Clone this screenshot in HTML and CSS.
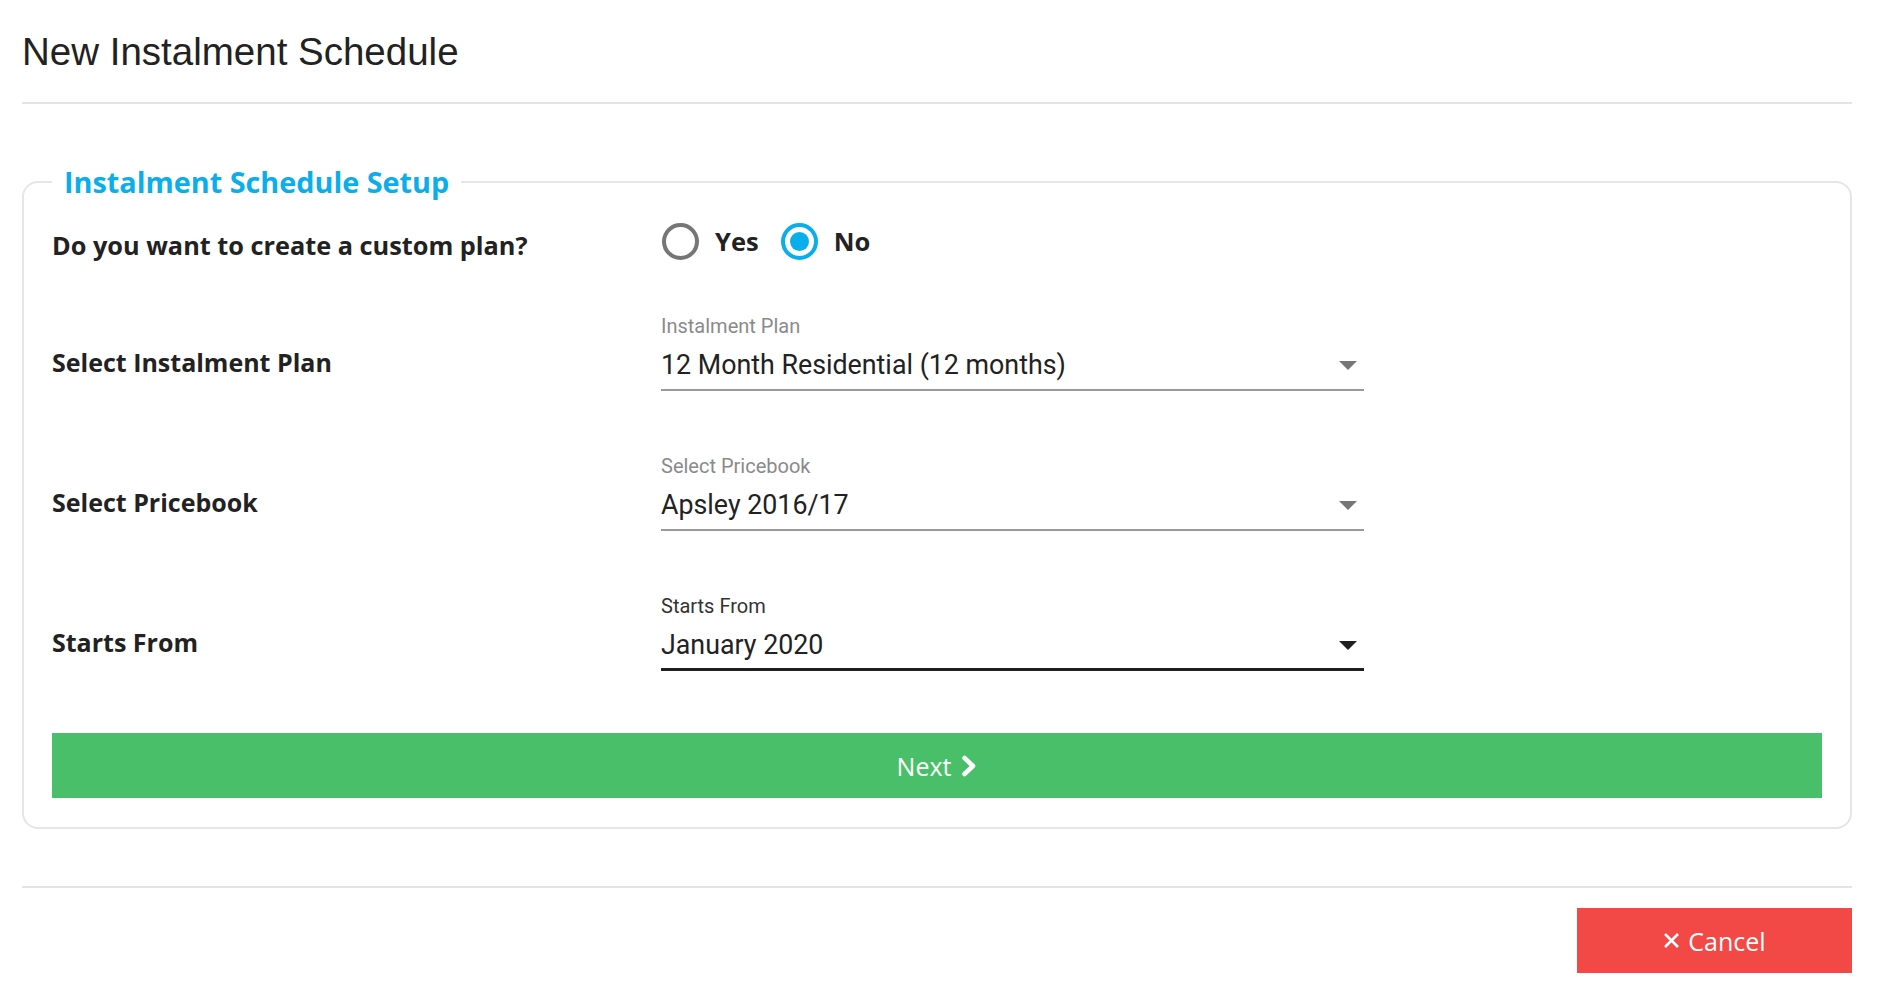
FILE: index.html
```html
<!DOCTYPE html>
<html lang="en">
<head>
<meta charset="utf-8">
<title>New Instalment Schedule</title>
<link rel="stylesheet" href="styles.css">
</head>
<body>
<div class="page">
  <header class="page-header">
    <h1 class="page-title">New Instalment Schedule</h1>
  </header>

  <fieldset class="setup">
    <legend class="setup-legend">Instalment Schedule Setup</legend>

    <div class="row row-question">
      <div class="row-label q-label">Do you want to create a custom plan?</div>
      <div class="radio-group">
        <label class="radio"><span class="radio-circle"></span><span class="radio-text">Yes</span></label>
        <label class="radio"><span class="radio-circle is-checked"><span class="radio-dot"></span></span><span class="radio-text">No</span></label>
      </div>
    </div>

    <div class="select-rows">
      <div class="row row-select">
        <div class="row-label">Select Instalment Plan</div>
        <div class="field">
          <div class="field-label">Instalment Plan</div>
          <div class="field-input">
            <span class="field-value">12 Month Residential (12 months)</span>
            <svg class="field-arrow" width="18" height="9" viewBox="0 0 18 9"><polygon points="0,0 18,0 9,9"/></svg>
          </div>
        </div>
      </div>

      <div class="row row-select">
        <div class="row-label">Select Pricebook</div>
        <div class="field">
          <div class="field-label">Select Pricebook</div>
          <div class="field-input">
            <span class="field-value">Apsley 2016/17</span>
            <svg class="field-arrow" width="18" height="9" viewBox="0 0 18 9"><polygon points="0,0 18,0 9,9"/></svg>
          </div>
        </div>
      </div>

      <div class="row row-select">
        <div class="row-label">Starts From</div>
        <div class="field field-active">
          <div class="field-label">Starts From</div>
          <div class="field-input">
            <span class="field-value">January 2020</span>
            <svg class="field-arrow" width="18" height="9" viewBox="0 0 18 9"><polygon points="0,0 18,0 9,9"/></svg>
          </div>
        </div>
      </div>
    </div>

    <button class="btn btn-next" type="button">
      <span>Next</span>
      <svg class="btn-chevron" width="16" height="22" viewBox="0 0 16 22"><path d="M3.5 3 L12 11 L3.5 19"/></svg>
    </button>
  </fieldset>

  <footer class="page-footer">
    <button class="btn btn-cancel" type="button">
      <svg class="btn-x" width="17" height="17" viewBox="0 0 17 17"><path d="M2 2 L15 15 M15 2 L2 15"/></svg>
      <span>Cancel</span>
    </button>
  </footer>
</div>
</body>
</html>
```

FILE: styles.css
```css
* {
  box-sizing: border-box;
}

html, body {
  margin: 0;
  padding: 0;
  background: #ffffff;
}

body {
  font-family: "Open Sans", "Liberation Sans", Arial, sans-serif;
  color: #222222;
}

.page {
  padding: 0 36px 0 22px;
}

/* Header */
.page-header {
  padding: 29px 0 27px;
  border-bottom: 2px solid #e4e4e4;
}

.page-title {
  margin: 0;
  font-family: "Liberation Sans", Arial, sans-serif;
  font-weight: 400;
  font-size: 38.5px;
  line-height: 46px;
  color: #222222;
}

/* Fieldset */
.setup {
  margin: 58px 0 0;
  padding: 0 28px 29px;
  border: 2px solid #e6e6e6;
  border-radius: 16px;
  min-inline-size: 0;
}

.setup-legend {
  padding: 0 12px;
  font-family: "Open Sans", sans-serif;
  font-weight: 700;
  font-size: 28.8px;
  line-height: 40px;
  color: #0aaeea;
}

.row {
  display: flex;
}

.row-label {
  width: 609px;
  flex: none;
  font-family: "Open Sans", sans-serif;
  font-weight: 700;
  font-size: 25px;
  line-height: 34px;
  color: #222222;
}

/* Question row */
.row-question {
  height: 112px;
  align-items: flex-start;
  padding-top: 20px;
}

.q-label {
  margin-top: 6px;
  font-size: 25.3px;
}

.radio-group {
  display: flex;
  align-items: center;
  gap: 21px;
  height: 38px;
}

.radio {
  display: flex;
  align-items: center;
  gap: 16px;
}

.radio-circle {
  width: 37px;
  height: 37px;
  border: 4px solid #767676;
  border-radius: 50%;
  display: flex;
  align-items: center;
  justify-content: center;
  margin-left: 1px;
}

.radio-circle.is-checked {
  border-color: #0aaeea;
}

.radio-dot {
  width: 19px;
  height: 19px;
  border-radius: 50%;
  background: #0aaeea;
}

.radio-text {
  font-weight: 700;
  font-size: 25.5px;
  line-height: 34px;
  color: #222222;
}

/* Select rows */
.select-rows {
  display: flex;
  flex-direction: column;
  gap: 63px;
}

.row-select {
  align-items: flex-end;
}

.row-select .row-label {
  padding-bottom: 12px;
}

.field {
  width: 703px;
  font-family: Roboto, "Liberation Sans", sans-serif;
}

.field-label {
  font-size: 20px;
  line-height: 24px;
  color: #8a8a8a;
  margin-bottom: 11px;
}

.field-input {
  display: flex;
  align-items: center;
  justify-content: space-between;
  padding-bottom: 8px;
  border-bottom: 2px solid #9a9a9a;
}

.field-value {
  font-size: 26.8px;
  line-height: 32px;
  color: #222222;
}

.field-arrow {
  margin-right: 7px;
  fill: #767676;
}

.field-active .field-label {
  color: #333333;
}

.field-active .field-input {
  border-bottom: 3px solid #1f1f1f;
  padding-bottom: 7px;
}

.field-active .field-arrow {
  fill: #1f1f1f;
}

/* Buttons */
.btn {
  display: flex;
  align-items: center;
  justify-content: center;
  border: 0;
  margin: 0;
  padding: 0;
  height: 65px;
  font-family: "Open Sans", sans-serif;
  font-weight: 400;
  font-size: 25px;
  color: #ffffff;
  cursor: pointer;
}

.btn-next {
  width: 100%;
  margin-top: 62px;
  background: #4abf69;
  gap: 10px;
}

.btn-chevron path {
  fill: none;
  stroke: #ffffff;
  stroke-width: 4.5;
  stroke-linecap: round;
  stroke-linejoin: round;
}

.page-footer {
  margin-top: 57px;
  padding: 20px 0 10px;
  border-top: 2px solid #e4e4e4;
  display: flex;
  justify-content: flex-end;
}

.btn-cancel {
  width: 275px;
  background: #f24846;
  gap: 8px;
}

.btn-x path {
  fill: none;
  stroke: #ffffff;
  stroke-width: 2.6;
}
```
